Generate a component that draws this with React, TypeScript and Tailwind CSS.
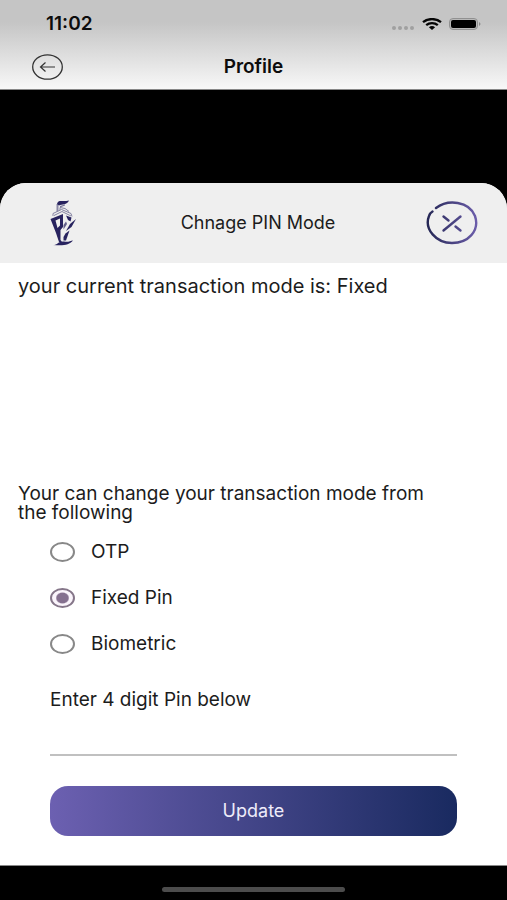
import { useState } from 'react';

const modes = [
  { id: 'otp', label: 'OTP' },
  { id: 'fixed', label: 'Fixed Pin' },
  { id: 'biometric', label: 'Biometric' },
];

function StatusBar() {
  return (
    <div className="h-11 pl-[46px] pr-[26px] pt-1 flex items-center justify-between">
      <span className="text-[19px] leading-5 font-semibold">11:02</span>
      <div className="flex items-center gap-[7px]">
        <svg className="w-6 h-4" viewBox="0 0 24 16" fill="#a0a0a0">
          <circle cx="3" cy="12" r="2" />
          <circle cx="9" cy="12" r="2" />
          <circle cx="15" cy="12" r="2" />
          <circle cx="21" cy="12" r="2" />
        </svg>
        <svg className="w-5 h-3" viewBox="0 0 20 12" fill="none" stroke="#050505" strokeWidth="2.3">
          <path d="M1 4.2C6 0 14 0 19 4.2" />
          <path d="M4.2 7.2C7.5 4.4 12.5 4.4 15.8 7.2" />
          <path d="M6.9 9.2Q10 7 13.1 9.2L10 12Z" fill="#050505" stroke="none" />
        </svg>
        <svg className="w-8 h-3" viewBox="0 0 32 12">
          <rect x="0.5" y="0.5" width="28" height="11" rx="3.5" fill="#b8b8b8" stroke="#919191" />
          <rect x="2" y="2" width="25" height="8" rx="2" fill="#000" />
          <path d="M30 4Q33 6 30 8Z" fill="#8b8b8b" />
        </svg>
      </div>
    </div>
  );
}

function ShipLogo() {
  return (
    <svg className="w-7 h-12" viewBox="0 0 28 48" fill="#28235f">
      <path d="M7 5C8 0 12 3 19 1.5C17 6 12 5 9 6.5Z" />
      <path d="M6.5 5H8.5V12L6.5 13Z" opacity="0.5" />
      <path d="M10 7L15 5.5V6.5L10 8.5Z" opacity="0.6" />
      <g fill="none" stroke="#8583a2" strokeWidth="1">
        <path d="M3 17V14.5L11.5 10.5L21 14.5L22 17.5" />
        <path d="M4 16.5L12 12.5L21 17" />
        <path d="M10 11V8.5L15 9.5L19 12.5" />
      </g>
      <path fillRule="evenodd" d="M0.5 20L13 15V28L10.5 31V41L12 43H9L6 34ZM5.5 21.5L7.5 29L10 26.5V19.5Z" />
      <path d="M16 16.5L21.5 18.5L20.5 22.5L18 21Z" />
      <path d="M26 20L21.5 28L16 32L20 25Z" />
      <path d="M13.5 26L16 22.5L17 25L13.5 30.5Z" opacity="0.7" />
      <path d="M19.5 31.5L16 41.5H13.5V38L15.5 34.5Z" />
      <path d="M3 46C8 46 8 42 14 42.5C18 43.5 20 42 23 41.5C19 46 14 47 3 46Z" />
    </svg>
  );
}

function CloseIcon() {
  return (
    <svg className="w-[52px] h-11" viewBox="0 0 52 44" fill="none" strokeWidth="2.4" strokeLinecap="round">
      <defs>
        <linearGradient id="close-stroke" x1="0" y1="0" x2="52" y2="0" gradientUnits="userSpaceOnUse">
          <stop offset="0" stopColor="#232653" />
          <stop offset="1" stopColor="#6d5eac" />
        </linearGradient>
      </defs>
      <g stroke="url(#close-stroke)">
        <path d="M10 7C22 -2 43 0 49 15C54 30 42 42 26 42C10 42 -2 28 3 15Q4 12 6.5 10.5" />
        <path d="M17.5 29.5L34.5 15.5" />
        <path d="M17.5 15.5L22.5 19.5M29.5 25.5L34.5 29.5" />
      </g>
    </svg>
  );
}

export default function App() {
  const [mode, setMode] = useState('fixed');
  const [pin, setPin] = useState('');

  return (
    <div className="min-h-screen flex flex-col bg-black text-[#1c1c1c] font-['Inter',sans-serif]">
      <header className="bg-linear-to-b from-[#c5c5c5] from-25% to-[#f8f8f8] border-b border-[#888] text-[#0c0c0c]">
        <StatusBar />
        <div className="h-[45px] px-8 grid grid-cols-[1fr_auto_1fr] items-center">
          <button aria-label="Back" className="w-[31px] h-[26px]">
            <svg className="w-full h-full" viewBox="0 0 31 26" fill="none" stroke="#333">
              <ellipse cx="15.5" cy="13" rx="14.8" ry="12.2" strokeWidth="1.3" />
              <path d="M23 13H9M13.5 8.5L8.5 13L13.5 17.5" strokeWidth="1.2" />
            </svg>
          </button>
          <h1 className="text-[19px] leading-6 font-semibold">Profile</h1>
        </div>
      </header>

      <main className="mt-[93px] flex-1 flex flex-col bg-white rounded-t-[26px] overflow-hidden border-b border-[#888]">
        <div className="h-20 pl-[50px] pr-[29px] bg-[#efefef] grid grid-cols-[40px_1fr_52px] items-center">
          <ShipLogo />
          <h2 className="text-center text-[18px] leading-6">Chnage PIN Mode</h2>
          <button aria-label="Close">
            <CloseIcon />
          </button>
        </div>

        <p className="px-[18px] pt-[11px] text-[20px] leading-6">your current transaction mode is: Fixed</p>

        <form className="mt-auto pb-[29px]" onSubmit={event => event.preventDefault()}>
          <fieldset>
            <legend className="px-[18px] max-w-[450px] text-[19px] leading-[19px]">
              Your can change your transaction mode from the following
            </legend>
            <div className="pt-[18px] px-[50px] flex flex-col gap-[22px]">
              {modes.map(item => (
                <label key={item.id} className="flex items-center gap-4 text-[19px] leading-6">
                  <input
                    type="radio"
                    name="mode"
                    value={item.id}
                    checked={mode === item.id}
                    onChange={() => setMode(item.id)}
                    className="appearance-none w-[25px] h-5 rounded-[50%] border-2 border-[#888] checked:border-[#857689] checked:bg-[radial-gradient(7px_6px_at_center,#85708f_80%,#fbf5fc_100%)]"
                  />
                  {item.label}
                </label>
              ))}
            </div>
          </fieldset>

          <div className="px-[50px] pt-8">
            <label htmlFor="pin" className="block text-[19px] leading-6">Enter 4 digit Pin below</label>
            <input
              id="pin"
              type="password"
              inputMode="numeric"
              maxLength={4}
              value={pin}
              onChange={event => setPin(event.target.value)}
              className="block w-full h-11 border-b-2 border-[#c0c0c0] text-[19px] outline-none"
            />
            <button type="submit" className="mt-[30px] w-full h-[50px] rounded-[18px] bg-linear-to-r from-[#6c60b1] to-[#192a60] text-[#eeecfa] text-[18px] leading-6">
              Update
            </button>
          </div>
        </form>
      </main>

      <div className="h-[34px] flex items-end justify-center pb-2">
        <div className="w-[36%] h-[5px] rounded-full bg-[#4c4c4c]" />
      </div>
    </div>
  );
}
